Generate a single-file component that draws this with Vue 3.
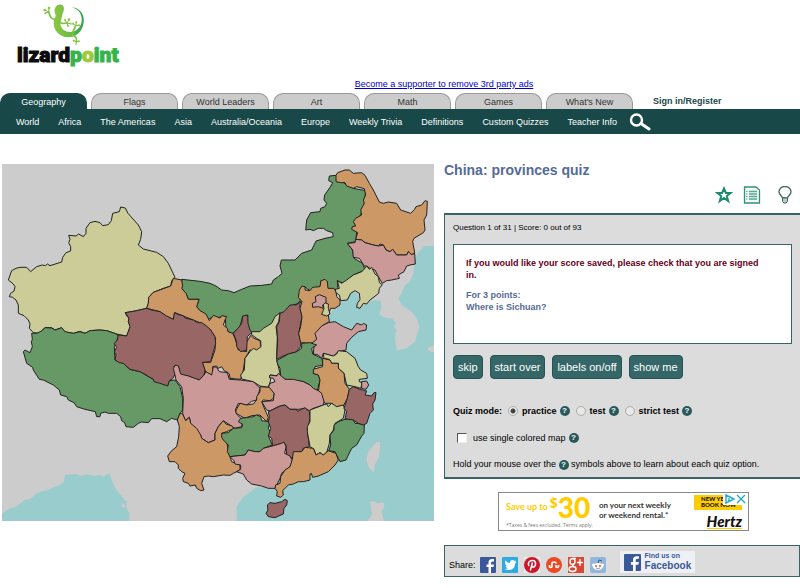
<script setup>
import { ref } from 'vue'

const tabs = ['Geography', 'Flags', 'World Leaders', 'Art', 'Math', 'Games', "What's New"]
const links = ['World', 'Africa', 'The Americas', 'Asia', 'Australia/Oceania', 'Europe', 'Weekly Trivia', 'Definitions', 'Custom Quizzes', 'Teacher Info']
const actions = ['skip', 'start over', 'labels on/off', 'show me']
const modes = ['practice', 'test', 'strict test']
const mode = ref('practice')
const single = ref(false)

// Origin of each map sheet; outlines are stored relative to their sheet.
const sheets = { nw: '-6 -12', ne: '624 -12', sw: '-6 498', se: '624 498' }

const waters = [
  ['se', '360,-50 395,-85 412,-95 425,-115 440,-112 450,-90 440,-65 470,-80 490,-90 512,-88 514,-70 508,-45 530,-35 545,-35 558,-20 550,-10 560,0 555,20 560,62 590,55 615,35 622,10 628,-10 620,-35 605,-55 575,-75 565,-95 575,-110 585,-135 600,-145 610,-170 612,-205 625,-235 645,-252 680,-252 680,580 80,580 80,530 100,500 135,475 195,460 300,300'],
  ['sw', '0,555 30,535 45,532 75,510 90,508 110,490 140,480 180,465 192,455 195,435 230,432 240,438 260,433 285,438 298,435 310,440 328,430 338,455 345,475 370,505 380,515 378,530 388,550 388,580 0,580'],
]
const islands = [
  ['se', '500,335 510,335 512,350 508,380 495,405 492,430 475,410 468,390 474,365 490,345'],
  ['se', '480,515 492,512 502,520 520,515 525,530 515,545 525,580 465,580 485,555'],
  ['se', '680,40 665,48 650,55 660,65 680,70'],
  ['sw', '366,521 373,519 377,527 372,535 365,530'],
]
const provinces = [
  ['Inner Mongolia', 'ne', '#669966', '-85,358 -30,364 0,370 18,378 35,390 55,392 72,398 95,388 120,378 155,376 185,372 190,360 205,350 216,340 210,318 214,300 255,300 275,280 305,270 318,243 345,235 370,230 368,218 350,212 340,205 325,205 310,212 300,208 287,210 290,180 302,158 330,155 332,145 345,140 350,130 342,120 344,105 360,82 368,68 356,62 358,48 378,46 395,65 430,85 467,92 463,130 452,165 435,180 440,215 437,245 412,250 428,270 432,295 458,310 465,330 430,345 400,370 382,362 384,390 352,385 352,365 333,362 330,385 300,392 283,380 270,395 276,425 240,440 215,480 190,495 160,510 150,522 122,520 112,500 113,467 98,470 88,505 65,522 48,508 46,470 0,475 -8,480 -14,468 -30,455 -40,440 -33,418 -65,418 -72,400 -85,385'],
  ['Xinjiang', 'nw', '#cccc99', '25,360 35,332 48,325 60,322 80,322 92,335 110,320 127,315 137,317 142,312 150,317 185,306 188,292 198,278 212,273 212,260 206,248 210,238 206,226 228,228 236,222 250,230 258,220 258,205 270,188 285,184 300,188 308,197 325,194 334,182 338,160 358,155 362,141 376,144 384,160 415,195 425,215 422,238 415,255 430,267 470,277 490,290 505,310 525,352 515,362 512,378 490,385 460,397 446,412 445,430 440,445 405,453 376,458 380,468 387,475 385,485 391,500 380,528 350,522 320,512 298,510 270,512 255,520 240,514 220,520 195,516 185,503 165,510 155,503 135,503 125,512 118,520 100,518 88,505 90,492 85,480 72,467 55,460 55,435 48,420 38,412 28,410 32,400 42,393 45,380 40,372'],
  ['Tibet', 'sw', '#669966', '95,10 110,10 125,3 135,-7 155,-6 165,0 185,-7 195,5 220,10 240,5 255,10 270,2 298,0 320,2 350,12 355,20 343,50 345,90 370,100 390,118 420,125 460,148 503,166 508,152 525,150 540,170 548,205 548,240 540,250 532,270 515,265 500,275 480,266 455,266 445,278 425,276 415,280 400,292 378,290 374,278 365,272 362,260 350,250 325,250 315,246 302,250 300,260 290,260 286,245 255,238 230,230 222,218 205,210 200,200 182,195 178,180 160,165 130,150 118,148 100,120 98,112 80,100 70,65 75,60 90,68 97,50 94,35 97,28'],
  ['Gansu', 'nw', '#cc9966', '520,355 545,360 548,378 545,385 558,400 565,418 597,418 590,440 600,452 618,462 628,482 640,466 660,474 665,467 680,470 675,480 670,495 682,505 684,515 698,520 705,535 715,570 740,575 738,550 752,526 762,535 780,542 783,560 770,575 750,570 735,595 730,630 722,658 690,655 688,642 680,635 672,632 665,620 655,625 650,618 638,620 638,645 618,640 607,607 632,607 645,570 647,535 632,510 605,490 555,470 525,458 520,478 500,470 480,455 440,445 445,430 446,412 460,397 512,378'],
  ['Qinghai', 'sw', '#996666', '376,-52 405,-57 440,-65 455,-60 480,-55 500,-42 520,-32 523,-52 535,-46 550,-43 555,-36 580,-30 592,-22 605,-22 620,-12 632,0 645,20 647,40 640,65 632,95 607,97 615,120 612,135 598,150 585,147 565,138 550,138 540,130 535,108 522,108 527,130 518,146 508,152 503,168 480,160 462,155 460,148 435,133 420,125 390,118 370,100 358,98 345,90 348,75 343,65 350,52 343,40 352,30 355,15 380,18 390,-10 385,-25 387,-35'],
  ['Sichuan', 'sw', '#cc9999', '527,105 535,108 542,132 565,138 598,150 612,135 618,125 635,135 640,110 650,112 658,125 682,128 688,148 720,150 760,155 780,175 770,210 755,214 740,225 715,220 706,240 712,255 728,270 725,290 705,295 670,272 655,290 645,310 645,330 625,338 605,325 602,315 590,308 582,295 572,280 568,262 555,272 548,250 550,205 545,170 528,150 525,135 520,115'],
  ['Yunnan', 'sw', '#cc9966', '540,250 548,252 557,272 568,262 572,280 590,295 602,315 605,325 625,338 645,330 645,310 655,290 670,272 678,282 695,288 702,295 680,305 665,310 680,335 688,375 695,395 720,405 720,420 700,430 690,436 670,435 640,440 625,438 612,440 605,460 612,480 602,482 590,475 586,465 570,468 565,460 550,455 548,445 555,430 545,425 535,415 535,405 525,395 508,395 503,378 515,362 530,350 536,320 538,290 532,270'],
  ['Ningxia', 'se', '#996666', '98,-42 113,-45 114,-20 120,0 125,8 112,20 110,60 92,65 80,50 80,35 70,10 88,-10 95,-20'],
  ['Shaanxi', 'se', '#cccc99', '210,-52 195,-40 185,-20 160,-5 150,5 125,5 125,14 140,25 152,32 153,50 140,60 130,55 120,65 105,85 103,120 92,135 95,147 130,155 150,168 175,172 182,150 180,135 212,138 205,110 200,88 202,20 198,-10 206,-25'],
  ['Shanxi', 'ne', '#996666', '270,422 262,434 240,435 222,455 210,460 208,485 200,500 203,540 200,598 215,590 235,582 258,576 272,560 273,545 266,520 270,500 276,470 270,445'],
  ['Hebei', 'ne', '#cc9966', '268,390 276,378 285,380 285,390 300,392 308,382 330,380 333,362 345,358 352,365 354,385 372,385 378,395 380,410 390,420 390,435 375,445 362,445 355,465 358,485 340,495 325,515 320,530 320,545 300,550 272,548 266,520 272,500 276,470 270,445 276,425 265,412'],
  ['Beijing', 'ne', '#cc9999', '307,430 318,425 316,410 328,404 348,412 348,430 338,435 340,445 325,440 308,442'],
  ['Tianjin', 'ne', '#cccc99', '345,428 355,432 355,445 360,462 350,468 335,463 342,445 340,435'],
  ['Heilongjiang', 'ne', '#cc9966', '378,46 383,38 405,30 418,30 430,40 455,38 465,46 478,70 490,90 508,126 520,130 535,126 560,130 572,150 602,160 614,148 618,140 635,135 645,122 652,124 650,165 642,180 645,210 640,218 612,235 608,245 614,278 605,284 595,275 590,285 575,285 560,285 548,268 540,275 528,270 520,255 510,252 505,258 490,255 465,248 455,240 437,238 443,218 425,208 427,200 437,198 430,185 437,175 455,165 452,150 463,130 460,120 467,105 463,86 440,80 430,85 410,78 405,68 392,68 378,65'],
  ['Jilin', 'ne', '#cc9999', '412,250 435,248 437,238 455,240 465,248 490,255 505,258 520,255 528,270 540,275 548,268 560,285 590,285 595,275 605,284 614,280 616,312 600,315 590,318 582,335 565,345 568,355 545,360 530,362 517,370 505,350 495,330 480,325 470,318 462,318 458,310 448,295 430,292 428,270'],
  ['Liaoning', 'ne', '#cccc99', '382,362 395,370 410,360 430,345 455,335 465,325 470,318 478,328 485,322 495,342 505,350 508,368 517,374 508,385 506,400 480,420 470,432 460,430 450,445 440,442 442,430 450,418 448,400 435,392 422,400 412,420 392,422 388,405 378,398 376,388 388,385'],
  ['Shandong', 'se', '#cc9999', '335,-12 355,-22 375,-25 400,-10 425,0 440,-20 455,-15 460,-20 470,-15 468,0 445,5 425,22 410,40 408,60 385,65 370,78 340,70 335,85 325,75 310,72 312,50 305,40 320,28 315,10'],
  ['Henan', 'se', '#669966', '200,92 235,72 258,66 275,55 275,40 300,38 320,45 305,55 308,72 335,85 340,105 315,110 310,130 325,135 330,150 322,182 305,175 300,165 280,155 225,148 212,138 210,115 204,105'],
  ['Jiangsu', 'se', '#cccc99', '340,70 370,78 380,72 385,62 410,65 435,85 445,110 452,120 470,130 472,145 448,148 448,155 457,158 452,175 435,170 410,165 402,130 385,115 385,100 365,100 358,88 342,85'],
  ['Anhui', 'se', '#cc9966', '338,85 360,90 365,100 385,100 385,115 402,130 405,160 418,178 412,205 400,228 375,230 365,220 345,220 338,208 325,185 330,150 325,135 310,130 310,118 338,110'],
  ['Hubei', 'se', '#cc9999', '180,135 200,138 205,130 225,148 250,148 280,155 300,165 310,175 325,182 335,190 342,215 340,225 310,235 298,242 285,235 265,238 240,238 225,225 205,230 180,243 170,240 155,215 190,212 192,190 175,172 180,160 195,155 190,145 178,143'],
  ['Chongqing', 'se', '#cc9966', '150,170 178,172 192,190 190,205 180,212 160,210 155,215 165,240 175,262 170,275 150,255 125,257 105,265 78,250 78,240 90,220 110,225 130,222 140,210 140,200 150,185'],
  ['Guizhou', 'se', '#669966', '35,310 55,308 70,295 95,293 98,283 85,275 92,265 130,260 140,255 152,260 155,272 180,275 175,295 185,315 175,318 187,345 160,355 150,365 135,365 115,360 105,375 60,380 52,365 55,345 40,330 35,322'],
  ['Hunan', 'se', '#996666', '178,260 175,245 190,238 210,228 225,225 240,238 260,238 262,244 285,233 298,245 300,265 298,275 292,300 298,350 280,355 275,365 255,368 252,388 230,375 228,345 215,340 188,348 185,325 175,318 182,295 175,275'],
  ['Jiangxi', 'se', '#cccc99', '300,240 340,225 350,222 355,230 365,220 380,230 400,225 405,240 400,265 375,280 370,300 360,315 358,340 350,368 340,375 330,368 318,375 312,358 300,350 292,305 292,290 300,275'],
  ['Guangxi', 'se', '#cc9999', '60,380 105,375 115,360 135,365 150,365 160,355 187,348 215,340 222,336 228,350 224,370 240,378 247,392 240,410 215,430 210,445 195,475 175,475 155,468 125,462 110,450 100,432 80,425 92,418 92,405 75,402 72,392'],
  ['Guangdong', 'se', '#cc9966', '247,388 250,365 275,365 285,352 310,355 318,375 330,368 340,375 355,362 378,370 385,390 375,405 355,425 325,438 308,442 304,430 300,432 300,450 280,455 265,455 250,462 235,465 218,482 220,495 212,502 200,498 202,485 195,475 197,465 210,460 212,440 225,420 240,410'],
  ['Hainan', 'se', '#996666', '225,508 232,512 230,525 222,535 220,552 195,563 175,560 168,550 174,540 172,525 180,518 195,520 215,515'],
  ['Fujian', 'se', '#669966', '405,268 420,265 430,270 435,280 463,282 462,310 455,318 440,345 425,355 415,375 408,390 390,395 385,385 375,365 356,362 362,345 360,315 372,300 372,285 385,275'],
  ['Zhejiang', 'se', '#996666', '418,178 430,170 450,178 470,183 465,195 485,198 492,188 498,188 495,210 488,222 490,240 480,250 470,280 460,285 445,280 430,270 405,266 410,245 402,235 412,205'],
  ['Shanghai', 'se', '#cc9999', '455,155 470,153 476,165 468,178 455,175'],
]
const shift = (s) => `translate(${sheets[s]})`
</script>

<template>
  <header>
    <a class="logo" href="#">
      <svg class="lizard" viewBox="100 10 126 126" role="img" aria-label="Lizard">
        <defs>
          <linearGradient id="skin" x1="0" x2="1"><stop offset="0" stop-color="#8dc63f" /><stop offset="0.5" stop-color="#6fbe44" /><stop offset="1" stop-color="#2fa04c" /></linearGradient>
        </defs>
        <path fill="url(#skin)" d="M138 22C144 13 158 12 162 22C165 33 158 40 157 50C156 58 151 64 152 74C155 90 168 98 184 97C205 95 218 78 216 56C214 38 204 27 184 22C206 24 219 36 222 56C225 86 206 112 178 113C150 114 131 92 132 68C132 58 138 54 138 48C137 40 131 33 138 22Z" />
        <g fill="none" stroke="#7cc142" stroke-width="5" stroke-linecap="round">
          <path d="M136 59C122 58 121 48 117 36M150 66C156 76 164 70 172 70M190 102C187 92 196 88 198 78M188 106C200 110 202 118 200 126" />
          <path stroke-width="3" d="M117 37L106 31M117 37L118 25M117 37L107 40M172 70L166 61M172 70L178 60M172 70L182 72M172 70L175 79M198 78L190 72M198 78L200 67M198 78L209 77M200 126L192 123M200 126L199 135M200 126L209 125" />
        </g>
        <g fill="#8cc83f"><circle cx="105" cy="31" r="4" /><circle cx="118" cy="25" r="4" /><circle cx="107" cy="41" r="3" /><circle cx="166" cy="60" r="3" /><circle cx="178" cy="60" r="4" /><circle cx="183" cy="72" r="3" /><circle cx="175" cy="79" r="3" /><circle cx="190" cy="72" r="3" /><circle cx="200" cy="68" r="3" /><circle cx="208" cy="77" r="3" /><circle cx="192" cy="123" r="3" /><circle cx="207" cy="125" r="3" /></g>
      </svg>
      <span class="wordmark">lizard<b>p<i>o</i>int</b></span>
    </a>
    <p class="supporter"><a href="#">Become a supporter to remove 3rd party ads</a></p>
    <nav class="tabs">
      <a v-for="(t, i) in tabs" :key="t" href="#" class="tab" :class="{ active: i === 0 }">{{ t }}</a>
      <a class="signin" href="#">Sign in/Register</a>
    </nav>
    <nav class="menu">
      <a v-for="l in links" :key="l" href="#">{{ l }}</a>
      <button class="search" type="button" aria-label="Search">
        <svg viewBox="0 0 22 18"><circle cx="7.500" cy="7" r="5.500" fill="none" stroke="#fff" stroke-width="2.400" /><path d="M12 10.500L20 16" stroke="#fff" stroke-width="3" stroke-linecap="round" /></svg>
      </button>
    </nav>
  </header>

  <main>
    <svg class="map" viewBox="0 0 1296 1071" role="img" aria-label="Map of China">
      <rect width="1296" height="1071" fill="#ccc" />
      <polygon v-for="(w, i) in waters" :key="'w' + i" :points="w[1]" :transform="shift(w[0])" fill="#99cccc" />
      <polygon v-for="(w, i) in islands" :key="'i' + i" :points="w[1]" :transform="shift(w[0])" class="island" />
      <polygon v-for="p in provinces" :key="p[0]" :points="p[3]" :transform="shift(p[1])" :fill="p[2]" class="province" />
    </svg>

    <section class="side">
      <h1>China: provinces quiz</h1>
      <div class="tools">
        <button type="button" aria-label="Favourite">
          <svg viewBox="0 0 18 18"><path d="M9 2.500L10.900 7H15.500L11.800 10L13.200 15L9 12L4.800 15L6.200 10L2.500 7H7.100Z" fill="none" stroke="#1b8a70" stroke-width="2" /></svg>
        </button>
        <button type="button" aria-label="Study list">
          <svg viewBox="0 0 18 18"><path d="M1.500 1H13L16.500 4V17H1.500Z" fill="#f2faf7" stroke="#35907a" stroke-width="1.300" /><path d="M6 5.500H14M6 8H14M6 10.500H14M6 13H14" stroke="#5aa794" stroke-width="1.500" /><path d="M3 5.500H4.500M3 8H4.500M3 10.500H4.500M3 13H4.500" stroke="#5aa794" /></svg>
        </button>
        <button type="button" class="hint" aria-label="Hint">
          <svg viewBox="0 0 18 18"><path d="M6.500 12C6.500 10 3 9 3 5.800A6 5.300 0 0 1 15 5.800C15 9 11.500 10 11.500 12Z" fill="#fff" stroke="#486b68" stroke-width="1.400" /><path d="M6.500 12H11.500V15.500L10 17H8L6.500 15.500Z" fill="#bcc8c6" stroke="#486b68" /></svg>
        </button>
      </div>

      <form class="quiz" @submit.prevent>
        <p class="score">Question 1 of 31 | Score: 0 out of 93</p>
        <div class="question">
          <p class="warn">If you would like your score saved, please check that you are signed in.</p>
          <p>For 3 points:<br />Where is Sichuan?</p>
        </div>
        <div class="actions">
          <button v-for="a in actions" :key="a" type="button">{{ a }}</button>
        </div>
        <div class="modes" role="radiogroup" aria-label="Quiz mode">
          <span class="lead">Quiz mode:</span>
          <span v-for="m in modes" :key="m" class="mode">
            <label><input v-model="mode" type="radio" name="mode" :value="m" />{{ m }}</label><span class="help">?</span>
          </span>
        </div>
        <div class="single">
          <label><input v-model="single" type="checkbox" />use single colored map</label><span class="help">?</span>
        </div>
        <p class="note">Hold your mouse over the <span class="help">?</span> symbols above to learn about each quiz option.</p>
      </form>

      <a class="ad" href="#">
        <span class="offer"><span class="save">Save up to</span><sup>$</sup><strong>30</strong></span>
        <span class="terms">on your next weekly<br />or weekend rental.*</span>
        <small>*Taxes &amp; fees excluded. Terms apply.</small>
        <span class="brand"><span class="book">NEW YEAR<br />BOOK NOW</span><em>Hertz</em></span>
        <svg class="choices" viewBox="0 0 24 12"><path d="M0 0H24V12H0Z" fill="#fff" /><path d="M3 2L11 6L3 10ZM6 5V8M14 2L22 10M22 2L14 10" fill="none" stroke="#20acc8" stroke-width="1.400" /></svg>
      </a>

      <div class="share">
        <span>Share:</span>
        <a href="#" aria-label="Facebook"><svg viewBox="0 0 16 16"><rect width="16" height="16" rx="1" fill="#3b5998" /><path d="M11 16V10H13.500L14 7.500H11V6Q11 4.500 12.500 4.500H14V2H12Q8.500 2 8.500 5.500V7.500H6.500V10H8.500V16Z" fill="#fff" /></svg></a>
        <a href="#" aria-label="Twitter"><svg viewBox="0 0 16 16"><rect width="16" height="16" rx="1" fill="#2daae1" /><path d="M2.500 12Q5 12 6 11Q4 11 3.500 9H5Q3 8 3 6L4 6.500Q2.500 5 3.500 3.500Q5.500 6 8 6Q8 3 10.500 3Q12 3 12.500 4L14 3.500L13.500 5L14.500 5L13 6.500Q13 13 7 13Q4.500 13 2.500 12Z" fill="#fff" /></svg></a>
        <a href="#" aria-label="Pinterest"><svg viewBox="0 0 16 16"><rect width="16" height="16" fill="#f4e9e9" /><circle cx="8" cy="8" r="8" fill="#c9182c" /><path d="M5 9Q3.500 7 5 5Q6.500 3 9 3.500Q12 4 11.500 7.500Q11 10 9 10Q7.500 10 7.500 8.500M8.500 5.500L6.300 13.500" fill="none" stroke="#fff" stroke-width="1.500" /></svg></a>
        <a href="#" aria-label="StumbleUpon"><svg viewBox="0 0 16 16"><circle cx="8" cy="8" r="8" fill="#eb4924" /><path d="M3.500 8V9.500Q3.500 10.500 4.700 10.500T6 9.500V6.500Q6 5 8 5T10 6.500M10 8V9.500Q10 10.500 11.200 10.500T12.500 9.500V8" fill="none" stroke="#fff" stroke-width="1.700" /></svg></a>
        <a href="#" aria-label="Google Plus"><svg viewBox="0 0 16 16"><rect width="16" height="16" fill="#d64937" /><g fill="none" stroke="#fff" stroke-width="1.400"><ellipse cx="4.500" cy="4.500" rx="2.500" ry="3" /><ellipse cx="4.500" cy="12" rx="3.500" ry="2.500" /><path d="M4 1.500H8M6 7Q3 8 6.500 10M12 2V9M9 5.500H15" /></g></svg></a>
        <a href="#" aria-label="Reddit"><svg viewBox="0 0 16 16"><rect width="16" height="16" rx="2" fill="#91b7dc" /><path d="M8 6L9 3L12 4" fill="none" stroke="#405b78" /><circle cx="3.500" cy="8" r="1.500" fill="#fff" /><circle cx="12.500" cy="8" r="1.500" fill="#fff" /><ellipse cx="8" cy="9.500" rx="5" ry="3.500" fill="#fff" /><circle cx="6" cy="9" r="1" fill="#e25032" /><circle cx="10" cy="9" r="1" fill="#e25032" /><path d="M6 11Q8 12.500 10 11" fill="none" stroke="#555" stroke-width=".6" /></svg></a>
        <a class="find" href="#">
          <svg viewBox="0 0 16 16"><rect width="16" height="16" rx="1" fill="#3b5998" /><path d="M11 16V10H13.500L14 7.500H11V6Q11 4.500 12.500 4.500H14V2H12Q8.500 2 8.500 5.500V7.500H6.500V10H8.500V16Z" fill="#fff" /></svg>
          <span class="words"><span>Find us on</span><b>Facebook</b></span>
        </a>
      </div>
    </section>
  </main>
</template>

<style>
body { background: #fff; font-family: "Liberation Sans", Arial, sans-serif; }
</style>

<style scoped>
* { box-sizing: border-box; }
p, h1 { margin: 0; }
a { color: inherit; text-decoration: none; }
button { font-family: inherit; cursor: pointer; }
svg { display: block; }

.logo { display: flex; flex-direction: column; width: 104px; margin-left: 17px; padding-top: 3px; }
.lizard { width: 42px; height: 42px; margin-left: 26px; }
.wordmark { margin-top: -3px; color: #0b0b0b; font: 900 21px/26px Roboto, sans-serif; -webkit-text-stroke: 1px currentColor; }
.wordmark b { font-weight: 900; color: #35b44a; }
.wordmark i { font-style: normal; color: #9bca3c; }
.supporter { margin-top: 9px; padding-left: 88px; text-align: center; font-size: 9px; line-height: 14px; }
.supporter a { color: #00c; text-decoration: underline; }
.tabs { display: flex; gap: 4px; margin-top: 2px; }
.tab { width: 87px; height: 16px; border: 1px solid #999; border-bottom: 0; border-radius: 10px 10px 0 0; background: #ccc; color: #333; font-size: 9px; line-height: 16px; text-align: center; }
.tab.active { background: #184848; border-color: #184848; color: #fff; }
.signin { margin-left: 16px; color: #184848; font-size: 9px; font-weight: bold; line-height: 16px; }
.menu { display: flex; align-items: center; gap: 19px; height: 25px; padding-left: 16px; background: #184848; color: #fff; font-size: 9px; white-space: nowrap; }
.search { width: 22px; height: 18px; margin-left: -7px; padding: 0; border: 0; background: none; }

main { display: grid; grid-template-columns: minmax(0, 432fr) minmax(0, 356fr); column-gap: 10px; align-items: start; padding: 30px 0 0 2px; }
.map { width: 100%; }
.province { stroke: #222; stroke-width: 3; stroke-linejoin: round; }
.island { fill: #ccc; stroke: #aab8b8; stroke-width: 1; }

h1 { font-size: 14px; line-height: 16px; color: #556b96; margin-top: -2px; }
.tools { display: flex; justify-content: flex-end; gap: 10px; padding: 8px 6px 9px 0; }
.tools button { width: 18px; height: 18px; padding: 0; border: 0; background: none; }
.tools .hint { margin-left: 5px; }

.quiz { border: 1px solid #396467; border-width: 2px 0 2px 1px; background: #dcdcdc; padding: 8px 8px 6px; font-size: 9px; }
.score { font-size: 8px; line-height: 10px; }
.question { min-height: 100px; margin-top: 11px; padding: 12px 24px 12px 12px; border: 1px solid #396467; background: #fff; color: #556b96; font-weight: bold; line-height: 12px; }
.question p + p { margin-top: 8px; }
.warn { color: #602; }
.actions { display: flex; gap: 7px; margin-top: 11px; }
.actions button { height: 24px; padding: 0 4px; border: 1px solid #285354; border-radius: 4px; background: #356768; color: #fff; font-size: 11px; }
.modes { display: flex; align-items: center; gap: 6px; margin-top: 24px; height: 16px; font-weight: bold; }
.mode, .single, label { display: flex; align-items: center; }
input { appearance: none; margin: 0; background: #e8e8e8; flex: none; }
.mode input { width: 10px; height: 10px; margin-right: 4px; border: 1px solid #aaa; border-radius: 50%; }
.mode input:checked { background: radial-gradient(circle, #444 0 2px, #eee 3px); }
.help { display: inline-block; width: 10px; height: 10px; margin-left: 3px; border-radius: 50%; background: #28595a; color: #fff; font-size: 8px; font-weight: bold; line-height: 10px; text-align: center; }
.single { margin-top: 11px; padding-left: 4px; height: 16px; }
.single input { width: 10px; height: 10px; margin-right: 6px; border: 1px solid #eee; border-top-color: #555; border-left-color: #555; background: #fff; }
.note { margin-top: 11px; line-height: 14px; }
.note .help { margin-left: 0; }

.ad { position: relative; display: grid; grid-template: 29px 8px / 93px 1fr 48px; width: 251px; margin: 13px auto 0 54px; padding: 0 6px 0 7px; border: 1px solid #888; background: #fff; font-family: "Open Sans", sans-serif; }
.offer { display: flex; align-items: center; height: 27px; color: #fc0; font-weight: bold; white-space: nowrap; }
.save { font: bold 9px/12px Lato, sans-serif; }
.offer sup { font-size: 14px; line-height: 14px; margin: 0 0 8px 2px; }
.offer strong { font: 900 28px/26px Lato, sans-serif; }
.terms { padding-top: 7px; color: #333; font: bold 8px/10px Lato, sans-serif; white-space: nowrap; }
.ad small { grid-column: 1 / 3; grid-row: 2; color: #777; font-size: 5px; line-height: 7px; }
.brand { grid-column: 3; grid-row: 1 / 3; text-align: right; color: #111; }
.book { display: block; height: 15px; margin-top: 2px; padding: 1px 7px 0; background: #fc0; font: 900 6px/6px Lato, sans-serif; white-space: nowrap; text-align: left; }
.brand em { display: inline-block; margin-top: 3px; border-bottom: 1px solid #fc0; font: italic 900 15px/14px Lato, sans-serif; }
.choices { position: absolute; right: 1px; top: 0; width: 24px; height: 12px; }

.share { display: flex; align-items: center; gap: 6px; height: 32px; margin-top: 14px; padding: 8px 4px 0; border: 1px solid #396467; background: #dcdcdc; font-size: 9px; }
.share > span { margin-right: -2px; }
.share svg { width: 16px; height: 16px; }
.find { display: flex; align-items: center; gap: 4px; height: 22px; margin: -6px 0 0 8px; padding: 0 4px; background: #eef0f5; color: #3b5998; font-size: 7px; font-weight: bold; line-height: 8px; }
.find svg { width: 17px; height: 17px; }
.words { display: flex; flex-direction: column; }
.words b { font-size: 10px; line-height: 12px; }
</style>
